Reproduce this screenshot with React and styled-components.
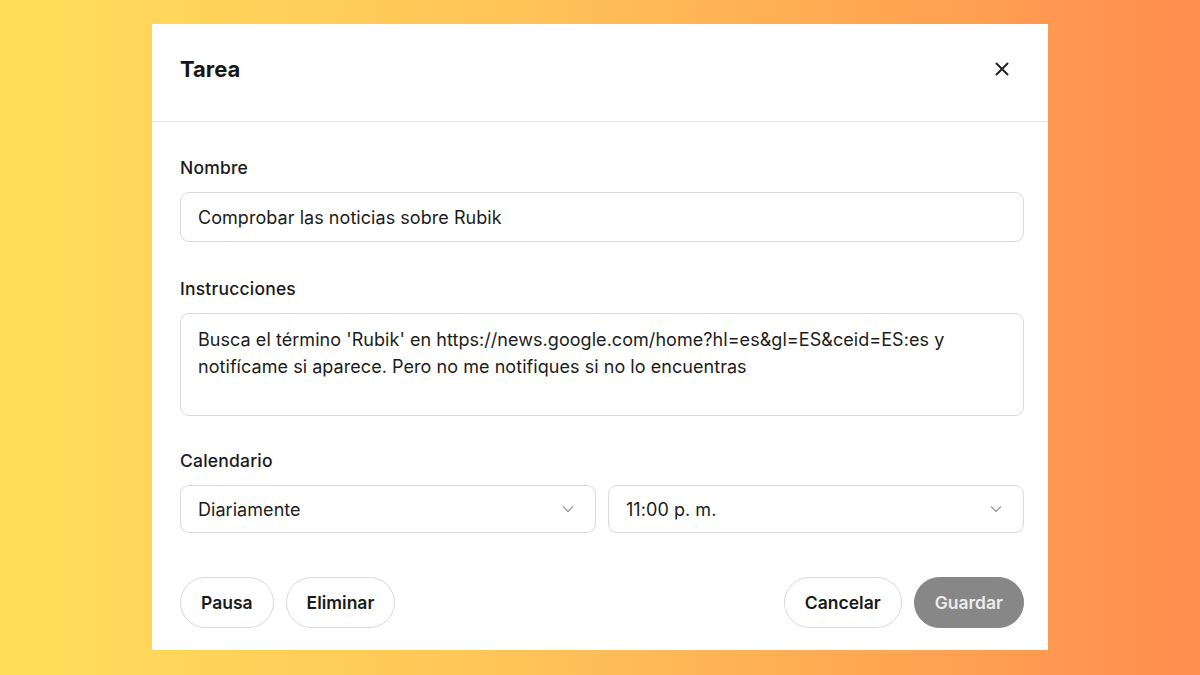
import React from "react";
import styled, { createGlobalStyle } from "styled-components";

const GlobalStyle = createGlobalStyle`
  html, body {
    margin: 0;
    padding: 0;
  }
  body {
    font-family: Inter, "Noto Sans", "Liberation Sans", sans-serif;
    color: #1a1a1a;
    -webkit-font-smoothing: antialiased;
  }
`;

const Backdrop = styled.div`
  width: 1200px;
  height: 675px;
  background: linear-gradient(90deg, #ffde5b 0%, #ffc258 45%, #ff8d4e 100%);
  padding: 24px 0 0 152px;
  box-sizing: border-box;
`;

const Dialog = styled.div`
  width: 896px;
  height: 626px;
  background: #fff;
  display: flex;
  flex-direction: column;
`;

const DialogHeader = styled.header`
  flex-shrink: 0;
  height: 98px;
  padding: 0 36px 8px 28px;
  border-bottom: 1px solid #e6e6e6;
  display: flex;
  align-items: center;
  justify-content: space-between;
  box-sizing: border-box;
`;

const Title = styled.h2`
  margin: 0;
  font-size: 22px;
  font-weight: 700;
  color: #161616;
`;

const CloseButton = styled.button`
  border: none;
  background: none;
  padding: 0;
  width: 20px;
  height: 20px;
  display: flex;
  align-items: center;
  justify-content: center;
`;

const DialogBody = styled.div`
  padding: 36px 24px 22px 28px;
  display: flex;
  flex-direction: column;
`;

const Field = styled.div`
  display: flex;
  flex-direction: column;
  margin-bottom: ${(props) => props.gap || "37px"};
`;

const Label = styled.label`
  font-size: 17.5px;
  font-weight: 500;
  line-height: 20px;
  letter-spacing: 0.2px;
  color: #1a1a1a;
  margin-bottom: 14px;
`;

const fieldText = `
  font-size: 18px;
  letter-spacing: 0.05px;
  color: #1c1c1c;
`;

const Input = styled.div`
  height: 50px;
  border: 1px solid #d9d9d9;
  border-radius: 9px;
  padding: 0 17px;
  display: flex;
  align-items: center;
  box-sizing: border-box;
  ${fieldText}
`;

const TextArea = styled.div`
  height: 103px;
  border: 1px solid #d9d9d9;
  border-radius: 9px;
  padding: 12px 17px;
  line-height: 27px;
  box-sizing: border-box;
  ${fieldText}
`;

const SelectRow = styled.div`
  display: grid;
  grid-template-columns: 1fr 1fr;
  gap: 12px;
`;

const Select = styled.div`
  height: 48px;
  border: 1px solid #d9d9d9;
  border-radius: 9px;
  padding: 0 20px 0 17px;
  display: flex;
  align-items: center;
  justify-content: space-between;
  box-sizing: border-box;
  ${fieldText}
`;

const Actions = styled.div`
  display: flex;
  justify-content: space-between;
  align-items: center;
`;

const ButtonGroup = styled.div`
  display: flex;
  gap: 12px;
`;

const PillButton = styled.button`
  height: 51px;
  padding: 0 20px;
  border-radius: 26px;
  border: 1px solid ${(props) => (props.primary ? "#888" : "#d9d9d9")};
  background: ${(props) => (props.primary ? "#878787" : "#fff")};
  color: ${(props) => (props.primary ? "#ececec" : "#1a1a1a")};
  font-family: inherit;
  font-size: 17.5px;
  font-weight: 600;
`;

const Chevron = () => (
  <svg width="14" height="14" viewBox="0 0 14 14" fill="none">
    <path d="M2.5 5L7 9.5L11.5 5" stroke="#9a9a9a" strokeWidth="1.3" strokeLinecap="round" strokeLinejoin="round" />
  </svg>
);

const App = () => (
  <>
    <GlobalStyle />
    <Backdrop>
      <Dialog>
        <DialogHeader>
          <Title>Tarea</Title>
          <CloseButton aria-label="Cerrar">
            <svg width="16" height="16" viewBox="0 0 16 16" fill="none">
              <path d="M2.5 2.5L13.5 13.5M13.5 2.5L2.5 13.5" stroke="#222" strokeWidth="2" strokeLinecap="round" />
            </svg>
          </CloseButton>
        </DialogHeader>
        <DialogBody>
          <Field>
            <Label>Nombre</Label>
            <Input>Comprobar las noticias sobre Rubik</Input>
          </Field>
          <Field gap="35px">
            <Label>Instrucciones</Label>
            <TextArea>
              Busca el término 'Rubik' en https://news.google.com/home?hl=es&amp;gl=ES&amp;ceid=ES:es y
              notifícame si aparece. Pero no me notifiques si no lo encuentras
            </TextArea>
          </Field>
          <Field gap="44px">
            <Label>Calendario</Label>
            <SelectRow>
              <Select>
                Diariamente
                <Chevron />
              </Select>
              <Select>
                11:00 p. m.
                <Chevron />
              </Select>
            </SelectRow>
          </Field>
          <Actions>
            <ButtonGroup>
              <PillButton>Pausa</PillButton>
              <PillButton>Eliminar</PillButton>
            </ButtonGroup>
            <ButtonGroup>
              <PillButton>Cancelar</PillButton>
              <PillButton primary>Guardar</PillButton>
            </ButtonGroup>
          </Actions>
        </DialogBody>
      </Dialog>
    </Backdrop>
  </>
);

export default App;
